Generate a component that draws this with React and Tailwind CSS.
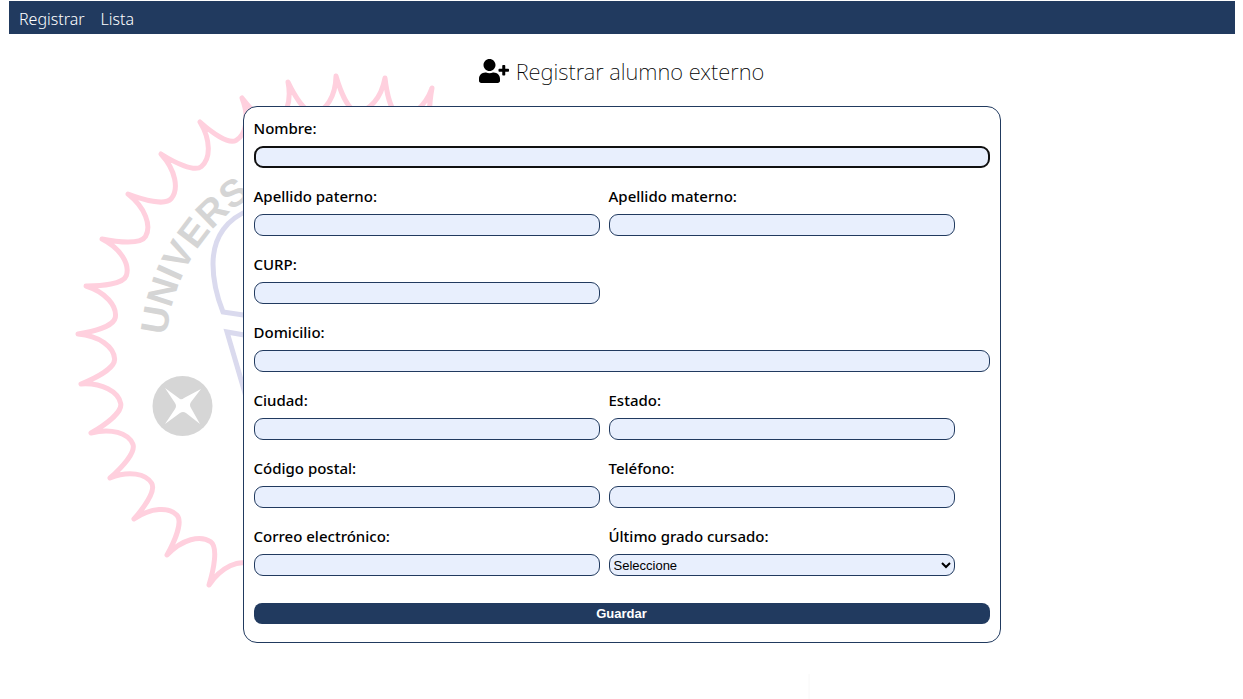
import { FaUserPlus } from "react-icons/fa";

const tips = [
  [476, 112], [432, 88], [385, 78], [336, 76], [288, 82], [242, 98], [200, 122],
  [161, 154], [128, 194], [102, 239], [86, 286], [78, 334], [81, 384], [91, 433],
  [110, 478], [134, 519], [167, 555], [209, 585], [256, 608],
];

// One scallop of the gear edge, as control points in units of the chord between two tips.
const scallop = [
  [0.06, 0.42], [0.3, 0.7], [0.54, 0.7],
  [0.72, 0.7], [0.9, 0.3], [1, 0],
];

function gearPath() {
  let d = `M${tips[0][0]} ${tips[0][1]}`;
  for (let i = 0; i < tips.length - 1; i++) {
    const [x, y] = tips[i];
    const dx = tips[i + 1][0] - x;
    const dy = tips[i + 1][1] - y;
    const p = scallop.map(([a, b]) => `${(x + a * dx + b * dy).toFixed(1)} ${(y + a * dy - b * dx).toFixed(1)}`);
    d += `C${p[0]} ${p[1]} ${p[2]}C${p[3]} ${p[4]} ${p[5]}`;
  }
  return d;
}

function Seal() {
  return (
    <svg
      aria-hidden="true"
      className="pointer-events-none absolute top-0 left-1/2 -z-10 -ml-[622px]"
      width="820"
      height="699"
      viewBox="0 0 820 699"
      fill="none"
    >
      <path d={gearPath()} stroke="#ffd0de" strokeWidth="5" strokeLinejoin="round" strokeLinecap="round" />
      <path id="seal-arc" d="M166.7 335.6A184 184 0 0 1 350 168" />
      <text
        fill="#d5d5d5"
        fontFamily="Liberation Sans, Arial, sans-serif"
        fontWeight="700"
        fontSize="38"
      >
        <textPath href="#seal-arc">UNIVERS</textPath>
      </text>
      <path
        d="M250 210C228 218 213 236 213 264C213 282 217 297 223 312L250 316M250 336L227 332L247 400"
        stroke="#dadaee"
        strokeWidth="5"
      />
      <circle cx="182.500" cy="406" r="30" fill="#d6d6d6" />
      <path
        d="M165 388L180 399Q182 400 184 398L201 389L191 402Q189 405 191 408L200 424L186 413Q183 411 180 413L165 424L175 409Q177 406 175 403Z"
        fill="#fff"
      />
      <path d="M809 674V699" stroke="#f8f8f8" strokeWidth="1" />
    </svg>
  );
}

const control =
  "block h-[22px] w-full rounded-[9px] border border-[#213a5f] bg-[#e8effd] font-['Liberation_Sans',Arial,sans-serif] text-[13px] text-black";

function Field({ id, label, wide, children, ...rest }) {
  return (
    <div className={wide ? "col-span-3" : ""}>
      <label htmlFor={id} className="mb-[6px] block text-[15px] leading-6 font-medium">
        {label}
      </label>
      {children || (
        <input
          id={id}
          name={id}
          className={`${control} px-1 outline-none focus:border-2 focus:border-[#101010]`}
          {...rest}
        />
      )}
    </div>
  );
}

export default function App() {
  return (
    <div className="relative isolate min-h-screen overflow-hidden bg-white px-2 pt-px font-['Noto_Sans','Open_Sans',sans-serif] text-black">
      <Seal />
      <nav className="ml-px flex h-[33px] items-center gap-4 bg-[#213a5f] px-[10px] pt-[2px] text-[16px] font-light text-white">
        <a href="#registrar">Registrar</a>
        <a href="#lista">Lista</a>
      </nav>
      <h1 className="mt-[19px] mb-[17px] flex h-9 items-center justify-center gap-[7px] text-[22px] font-extralight">
        <FaUserPlus className="text-[30px]" />
        Registrar alumno externo
      </h1>
      <form className="mx-auto w-full max-w-[758px] rounded-[14px] border border-[#213a5f] bg-white px-[10px] pt-[9px] pb-[18px]">
        <div className="grid grid-cols-[346fr_346fr_26fr] gap-x-[9px] gap-y-4">
          <Field id="nombre" label="Nombre:" wide autoFocus />
          <Field id="paterno" label="Apellido paterno:" />
          <Field id="materno" label="Apellido materno:" />
          <div />
          <Field id="curp" label="CURP:" />
          <Field id="domicilio" label="Domicilio:" wide />
          <Field id="ciudad" label="Ciudad:" />
          <Field id="estado" label="Estado:" />
          <div />
          <Field id="cp" label="Código postal:" />
          <Field id="telefono" label="Teléfono:" />
          <div />
          <Field id="correo" label="Correo electrónico:" />
          <Field id="grado" label="Último grado cursado:">
            <select id="grado" name="grado" className={control}>
              <option>Seleccione</option>
            </select>
          </Field>
        </div>
        <button
          type="button"
          className="mt-[27px] block h-[21px] w-full rounded-[8px] bg-[#213a5f] font-['Liberation_Sans',Arial,sans-serif] text-[13px] leading-5 font-bold text-white"
        >
          Guardar
        </button>
      </form>
    </div>
  );
}
